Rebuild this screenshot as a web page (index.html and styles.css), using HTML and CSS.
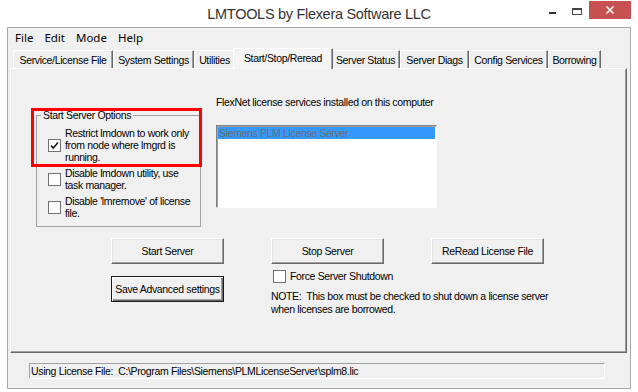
FILE: index.html
```
<!DOCTYPE html>
<html lang="en">
<head>
    <meta charset="UTF-8">
    <title>LMTOOLS by Flexera Software LLC</title>
    <link rel="stylesheet" href="styles.css">
</head>
<body>
    <div class="window">
        <div class="titlebar">
            <span class="title">LMTOOLS by Flexera Software LLC</span>
            <div class="controls">
                <span class="ctl ctl-min">
                    <svg width="26" height="18" viewBox="0 0 26 18"><rect x="9" y="11" width="7" height="2" fill="#333"/></svg>
                </span>
                <span class="ctl ctl-max">
                    <svg width="23" height="18" viewBox="0 0 23 18"><rect x="6.5" y="7.5" width="9" height="6" fill="none" stroke="#444"/><rect x="6" y="7" width="10" height="2" fill="#444"/></svg>
                </span>
                <span class="ctl ctl-close">
                    <svg width="42" height="18" viewBox="0 0 42 18"><path d="M17.5 5.5 L24.5 12.5 M24.5 5.5 L17.5 12.5" stroke="#fff" stroke-width="1.6"/></svg>
                </span>
            </div>
        </div>

        <div class="client">
            <ul class="menu">
                <li>File</li>
                <li>Edit</li>
                <li>Mode</li>
                <li>Help</li>
            </ul>

            <div class="tabs">
                <span class="tab">Service/License File</span>
                <span class="tab">System Settings</span>
                <span class="tab">Utilities</span>
                <span class="tab active">Start/Stop/Reread</span>
                <span class="tab">Server Status</span>
                <span class="tab">Server Diags</span>
                <span class="tab">Config Services</span>
                <span class="tab">Borrowing</span>
            </div>

            <div class="panel">
                <div class="top">
                    <fieldset class="group">
                        <legend>Start Server Options</legend>
                        <label class="check">
                            <span class="box">
                                <svg width="11" height="11" viewBox="0 0 11 11"><polyline points="2,5.5 4.3,8 9,2.5" fill="none" stroke="#111" stroke-width="1.5"/></svg>
                            </span>
                            <span>Restrict lmdown to work only<br>from node where lmgrd is<br>running.</span>
                        </label>
                        <label class="check">
                            <span class="box"></span>
                            <span>Disable lmdown utility, use<br>task manager.</span>
                        </label>
                        <label class="check">
                            <span class="box"></span>
                            <span>Disable 'lmremove' of license<br>file.</span>
                        </label>
                    </fieldset>

                    <div class="services">
                        <p class="services-label">FlexNet license services installed on this computer</p>
                        <div class="listbox">
                            <div class="list-item selected">Siemens PLM License Server</div>
                        </div>
                    </div>
                </div>

                <div class="actions">
                    <button type="button" class="btn">Start Server</button>
                    <button type="button" class="btn">Stop Server</button>
                    <button type="button" class="btn">ReRead License File</button>

                    <button type="button" class="btn btn-default save">Save Advanced settings</button>
                    <div class="shutdown">
                        <label class="check force">
                            <span class="box"></span>
                            <span>Force Server Shutdown</span>
                        </label>
                        <p class="note">NOTE:&nbsp; This box must be checked to shut down a license server<br>when licenses are borrowed.</p>
                    </div>
                </div>

                <div class="highlight"></div>
            </div>

            <div class="statusbar">
                <div class="status-field">Using License File:&nbsp; C:\Program Files\Siemens\PLMLicenseServer\splm8.lic</div>
            </div>
        </div>
    </div>
</body>
</html>
```

FILE: styles.css
```
body {
    margin: 0;
    background-color: #fff;
    font-family: "Liberation Sans", Arial, sans-serif;
    font-size: 10.5px;
    letter-spacing: -0.35px;
    color: #000;
}

.window {
    width: 638px;
    height: 392px;
    box-sizing: border-box;
    padding: 0 7px;
    background-color: #fff;
}

/* title bar */
.titlebar {
    display: grid;
    grid-template-columns: 1fr auto 1fr;
    height: 27px;
}

.title {
    grid-column: 2;
    line-height: 28px;
    font-size: 14.5px;
    letter-spacing: -0.3px;
    color: #333;
}

.controls {
    grid-column: 3;
    justify-self: end;
    display: flex;
    align-items: flex-start;
    margin-top: 1px;
}

.ctl {
    display: block;
    height: 18px;
}

.ctl svg {
    display: block;
}

.ctl-close {
    background-color: #c75050;
}

/* client area */
.client {
    border: 1px solid #a9a9a9;
    background-color: #f0f0f0;
}

.menu {
    display: flex;
    margin: 0;
    padding: 0 0 0 1.5px;
    list-style: none;
    height: 20px;
    font-family: "Noto Sans", sans-serif;
    font-size: 11.5px;
    letter-spacing: 0;
}

.menu li {
    padding: 0 5.5px;
    line-height: 20px;
}

/* tabs */
.tabs {
    display: flex;
    align-items: flex-end;
    height: 20px;
    padding-left: 5px;
}

.tab {
    box-sizing: border-box;
    height: 18px;
    line-height: 17px;
    padding-top: 1px;
    text-align: center;
    white-space: nowrap;
    border-top: 1px solid #fff;
    border-left: 1px solid #fff;
    border-right: 1px solid #696969;
    box-shadow: inset -1px 0 0 #a0a0a0;
    background-color: #f0f0f0;
}

.tab:nth-child(1) { width: 100px; }
.tab:nth-child(2) { width: 81px; }
.tab:nth-child(3) { width: 41px; }
.tab:nth-child(5) { width: 69px; }
.tab:nth-child(6) { width: 69px; }
.tab:nth-child(7) { width: 79px; }
.tab:nth-child(8) { width: 53px; }

.tab.active {
    position: relative;
    z-index: 1;
    width: 100px;
    height: 21px;
    margin: 0 -2px -1px;
    padding-top: 1px;
    line-height: 17px;
    background-color: #f4f4f4;
}

/* tab page */
.panel {
    position: relative;
    box-sizing: border-box;
    height: 285px;
    margin: 0 3px 0 2px;
    border: 1px solid;
    border-color: #fff #696969 #696969 #fff;
    box-shadow: inset -1px -1px 0 #a0a0a0;
}

.top {
    display: flex;
    align-items: flex-start;
    padding: 27px 0 0 25px;
}

.group {
    box-sizing: border-box;
    width: 165px;
    margin: 13px 0 0;
    padding: 0 4px 7px 4px;
    border: 1px solid #a0a0a0;
}

.group legend {
    padding: 0 2px;
    line-height: 13px;
}

.check {
    display: flex;
    align-items: center;
    gap: 4px;
    line-height: 12px;
}

.group .check {
    margin: 4px 0 0 7px;
}

.group .check:first-of-type {
    margin-top: 5px;
}

.box {
    flex: none;
    box-sizing: border-box;
    width: 13px;
    height: 13px;
    border: 1px solid #707070;
    background-color: #fff;
}

.box svg {
    display: block;
}

.services {
    margin-left: 15px;
}

.services-label {
    margin: 0;
    line-height: 13px;
}

.listbox {
    box-sizing: border-box;
    width: 221px;
    height: 83px;
    margin-top: 16px;
    padding: 1px;
    border: 1px solid;
    border-color: #828282 #fff #fff #828282;
    box-shadow: inset 1px 1px 0 #a0a0a0;
    background-color: #fff;
}

.list-item {
    height: 12px;
    line-height: 12px;
    padding-left: 1px;
    white-space: nowrap;
}

.list-item.selected {
    background-color: #3399ff;
    color: #6d6d6d;
}

/* buttons */
.actions {
    display: grid;
    grid-template-columns: repeat(3, 113px);
    column-gap: 47px;
    row-gap: 6px;
    margin-top: 11px;
    padding-left: 100px;
}

.btn {
    height: 26px;
    padding: 0;
    font: inherit;
    letter-spacing: inherit;
    color: #000;
    white-space: nowrap;
    background-color: #f0f0f0;
    border: 1px solid;
    border-color: #fff #696969 #696969 #fff;
    box-shadow: inset -1px -1px 0 #a0a0a0, inset 1px 1px 0 #e3e3e3;
}

.btn-default {
    border-color: #1a1a1a;
    box-shadow: inset 1px 1px 0 #fff, inset -1px -1px 0 #696969, inset -2px -2px 0 #a0a0a0;
}

.save {
    margin-top: 6px;
}

.shutdown {
    grid-column: span 2;
}

.force {
    margin-left: 2px;
    line-height: 13px;
}

.note {
    margin: 7px 0 0;
    line-height: 13px;
    white-space: nowrap;
}

/* annotation */
.highlight {
    position: absolute;
    left: 20px;
    top: 39px;
    width: 171px;
    height: 59px;
    box-sizing: border-box;
    border: 3px solid #f00;
}

/* status */
.statusbar {
    padding: 10px 0 9px 21px;
}

.status-field {
    box-sizing: border-box;
    width: 576px;
    height: 16px;
    padding-left: 1px;
    line-height: 14px;
    white-space: nowrap;
    border: 1px solid;
    border-color: #a0a0a0 #fff #fff #a0a0a0;
}
```
